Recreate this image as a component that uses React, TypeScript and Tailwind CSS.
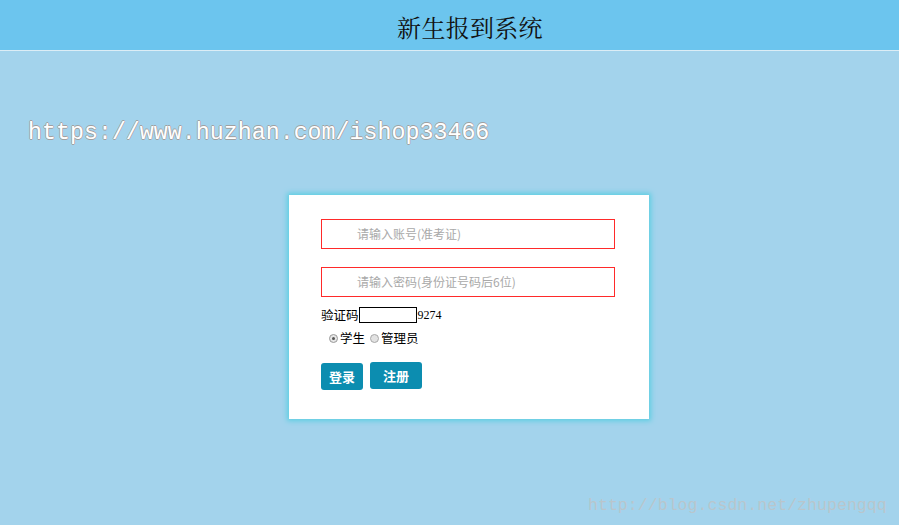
import React from "react";

export default function App() {
  return (
    <div className="relative min-h-screen bg-[#a3d3ec] font-['Noto_Sans_CJK_SC',sans-serif] overflow-hidden">
      <div className="h-[51px] bg-[#6cc5ee] border-b border-[#dcedf6] flex items-center justify-center pl-[41px]">
        <h1 className="text-[24px] text-[#111] font-['Noto_Serif_CJK_SC','Noto_Sans_CJK_SC',serif] tracking-[0.3px] pt-[4px]">
          新生报到系统
        </h1>
      </div>
      <div className="pt-[67px] pl-[28px] h-[144px]">
        <div className="font-['Liberation_Mono',monospace] text-[23.3px] leading-[30px] text-white [text-shadow:0.7px_0_0_#a0a0a0,-0.7px_0_0_#a0a0a0,0_0.7px_0_#a0a0a0,0_-0.7px_0_#a0a0a0]">
          https://www.huzhan.com/ishop33466
        </div>
      </div>
      <div className="ml-[289px] w-[360px] h-[224px] bg-white shadow-[0_0_5px_2px_#5ccfe2] pt-[24px] pl-[32px]">
        <div className="flex flex-col gap-[18px]">
          <div className="w-[294px] h-[30px] border border-[#ff2a2a] flex items-center pl-[35px] text-[12px] text-[#a9a9a9]">
            请输入账号(准考证)
          </div>
          <div className="w-[294px] h-[30px] border border-[#ff2a2a] flex items-center pl-[35px] text-[12px] text-[#a9a9a9]">
            请输入密码(身份证号码后6位)
          </div>
        </div>
        <div className="mt-[10px] flex items-center h-[16px] text-[12.5px] text-black">
          <span>验证码</span>
          <span className="w-[58px] h-[16px] border border-black inline-block"></span>
          <span className="ml-[1px] font-['Liberation_Serif',serif] text-[12px]">9274</span>
        </div>
        <div className="mt-[6px] flex items-center h-[18px] text-[12.5px] text-black pl-[8px]">
          <span className="w-[9px] h-[9px] rounded-full border border-[#9a9a9a] bg-[#e6e6e6] flex items-center justify-center mr-[2px]">
            <span className="w-[3px] h-[3px] rounded-full bg-[#555]"></span>
          </span>
          <span>学生</span>
          <span className="ml-[5px] w-[9px] h-[9px] rounded-full border border-[#a8a8a8] bg-[#e2e2e2] mr-[2px]"></span>
          <span>管理员</span>
        </div>
        <div className="mt-[15px] flex items-start gap-[7px]">
          <div className="mt-[1px] w-[42px] h-[27px] rounded-[3px] bg-[#0c8db0] text-white text-[13px] font-bold flex items-center justify-center">
            登录
          </div>
          <div className="w-[52px] h-[27px] rounded-[3px] bg-[#0c8db0] text-white text-[13px] font-bold flex items-center justify-center">
            注册
          </div>
        </div>
      </div>
      <div className="absolute left-[588px] top-[494px] font-['Liberation_Mono',monospace] text-[16.6px] text-[#b9c6cc]">
        http://blog.csdn.net/zhupengqq
      </div>
    </div>
  );
}
